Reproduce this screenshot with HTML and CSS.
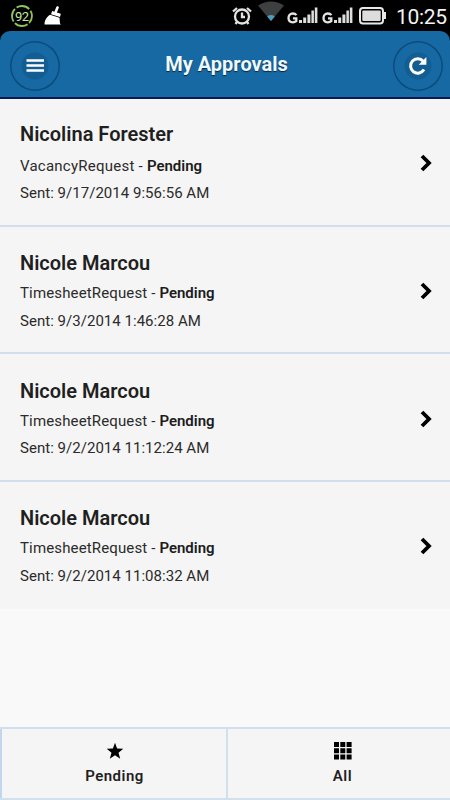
FILE: index.html
```html
<!DOCTYPE html>
<html lang="en">
<head>
<meta charset="utf-8">
<title>My Approvals</title>
<link rel="stylesheet" href="styles.css">
</head>
<body>
<div class="top">
<div class="status">
  <div class="status-left">
    <svg class="ring" width="24" height="24" viewBox="0 0 24 24"><circle cx="12" cy="12" r="10" fill="none" stroke="#8fc75c" stroke-width="1.8" stroke-dasharray="13.7 2" stroke-dashoffset="6"/><text x="12" y="16.5" text-anchor="middle" textLength="14">92</text></svg>
    <svg class="broom" width="18" height="20" viewBox="0 0 18 20"><path d="M13.5 1.5 11.7 6" stroke="#fff" stroke-width="2.6" stroke-linecap="round"/><path d="M8.2 5 16.8 7.8 16 11 7 8.2zM6 8.7 15.5 11.7 16 17.5 17 18.5H.5C.5 14 3 10.5 6 8.7z" fill="#fff"/></svg>
  </div>
  <div class="status-right">
    <svg class="alarm" width="20" height="20" viewBox="0 0 20 20" fill="none" stroke="#e4e4e4" stroke-width="2.3"><circle cx="10" cy="10.5" r="7"/><path d="M10 6.5V11H13M1 5.5 5 2M19 5.5 15 2M5 16 3.5 18M15 16l1.5 2"/></svg>
    <svg class="wifi" width="26" height="20" viewBox="0 0 26 20"><path d="M0 4.5Q13-3.5 26 4.5L13 20z" fill="#3d3f41"/><path d="M9.2 15.4Q13 12.8 16.8 15.4L13 20z" fill="#4a9dbd"/></svg>
    <svg class="signal" width="32" height="18" viewBox="0 0 32 18"><path d="M9.4 9.2Q8.2 7.5 5.8 7.5C3.2 7.5 1.5 9.3 1.5 12S3.2 16.3 5.8 16.3Q8 16.3 9.3 15.2V12.3H6" fill="none" stroke="#e4e4e4" stroke-width="2.3"/><path d="M12 14h3v3h-3zM16.2 11.5h3V17h-3zM20.4 8.5h3V17h-3zM24.4 4.5h2.5V17h-2.5zM27.8 1.5h2.6V17h-2.6z" fill="#dedede"/></svg>
    <svg class="signal" width="32" height="18" viewBox="0 0 32 18"><path d="M9.4 9.2Q8.2 7.5 5.8 7.5C3.2 7.5 1.5 9.3 1.5 12S3.2 16.3 5.8 16.3Q8 16.3 9.3 15.2V12.3H6" fill="none" stroke="#e4e4e4" stroke-width="2.3"/><path d="M12 14h3v3h-3zM16.2 11.5h3V17h-3zM20.4 8.5h3V17h-3zM24.4 4.5h2.5V17h-2.5zM27.8 1.5h2.6V17h-2.6z" fill="#dedede"/></svg>
    <svg class="battery" width="28" height="18" viewBox="0 0 28 18"><rect x="1" y="1" width="23" height="15.5" rx="3" fill="none" stroke="#e8e8e8" stroke-width="2"/><rect x="3.3" y="3.5" width="18.4" height="10.5" rx="1" fill="#ddd"/><path d="M25 5h2v7h-2z" fill="#e8e8e8"/></svg>
    <svg class="clock" width="54" height="24"><text x="0" y="19.5" textLength="51">10:25</text></svg>
  </div>
</div>
<header class="header">
  <button class="round" aria-label="Menu"><svg width="50" height="50" viewBox="0 0 50 50"><circle cx="25" cy="25" r="13.5" fill="#125d92"/><path d="M16.5 19.5H34M16.5 24.5H34M16.5 29.5H34" stroke="#fff" stroke-width="2.7"/></svg></button>
  <h1 class="title">My Approvals</h1>
  <button class="round" aria-label="Refresh"><svg width="50" height="50" viewBox="0 0 50 50"><circle cx="25" cy="25" r="13.5" fill="#125d92"/><path d="M30.2 20.2A7.2 7.2 0 1 0 31 28.6" fill="none" stroke="#fff" stroke-width="3"/><path d="M33.4 16V23.7H25.7z" fill="#fff"/></svg></button>
</header>
</div>
<main class="list">
  <article class="row">
    <div><h2 class="name">Nicolina Forester</h2><p class="line vacancy">VacancyRequest - <b>Pending</b></p><p class="line sent">Sent: 9/17/2014 9:56:56 AM</p></div>
    <svg class="chevron" width="12" height="18" viewBox="0 0 12 18"><path d="M2 2 9 9 2 16"/></svg>
  </article>
  <article class="row">
    <div><h2 class="name">Nicole Marcou</h2><p class="line">TimesheetRequest - <b>Pending</b></p><p class="line sent">Sent: 9/3/2014 1:46:28 AM</p></div>
    <svg class="chevron" width="12" height="18" viewBox="0 0 12 18"><path d="M2 2 9 9 2 16"/></svg>
  </article>
  <article class="row">
    <div><h2 class="name">Nicole Marcou</h2><p class="line">TimesheetRequest - <b>Pending</b></p><p class="line sent">Sent: 9/2/2014 11:12:24 AM</p></div>
    <svg class="chevron" width="12" height="18" viewBox="0 0 12 18"><path d="M2 2 9 9 2 16"/></svg>
  </article>
  <article class="row">
    <div><h2 class="name">Nicole Marcou</h2><p class="line">TimesheetRequest - <b>Pending</b></p><p class="line sent">Sent: 9/2/2014 11:08:32 AM</p></div>
    <svg class="chevron" width="12" height="18" viewBox="0 0 12 18"><path d="M2 2 9 9 2 16"/></svg>
  </article>
</main>
<nav class="tabs">
  <div class="tab pending"><svg width="18" height="18" viewBox="0 0 18 18"><path d="M9 .8 11.1 6.5 17.3 6.8 12.5 10.7 14.2 16.7 9 13.3 3.8 16.7 5.5 10.7.7 6.8 6.9 6.5z"/></svg><span>Pending</span></div>
  <div class="tab"><svg width="18" height="18" viewBox="0 0 18 18"><path d="M0 0h5v5H0zM6.3 0h5v5h-5zM12.6 0h5v5h-5zM0 6.3h5v5H0zM6.3 6.3h5v5h-5zM12.6 6.3h5v5h-5zM0 12.6h5v5H0zM6.3 12.6h5v5h-5zM12.6 12.6h5v5h-5z"/></svg><span>All</span></div>
</nav>
</body>
</html>
```
FILE: styles.css
```css
* { box-sizing: border-box; }
body {
  margin: 0;
  width: 450px;
  height: 800px;
  overflow: hidden;
  display: flex;
  flex-direction: column;
  background: #f9f9f9;
  color: #1f1f1f;
  font-family: Roboto, "Liberation Sans", sans-serif;
}
svg { display: block; flex: none; }
h1, h2, p { margin: 0; }
.top { flex: none; background: #000; }
.status {
  height: 31px;
  display: flex;
  justify-content: space-between;
}
.status-left, .status-right { display: flex; align-items: flex-start; }
.ring { margin: 4px 0 0 10px; }
.ring text { fill: #c5e8a4; font-size: 13px; }
.broom { margin: 6px 0 0 10px; }
.alarm { margin: 6px -2px 0 2px; }
.wifi { margin: 1px 3px 0 8px; }
.signal { margin: 6px 3px 0 0; }
.battery { margin: 7px 9px 0 2px; }
.clock { margin-top: 4px; }
.clock text { fill: #f2f2f2; font-size: 21px; }
.header {
  height: 68px;
  display: flex;
  align-items: center;
  justify-content: space-between;
  padding: 3px 7px 0 10px;
  border-bottom: 2px solid #091b54;
  border-radius: 10px 10px 0 0;
  background: #1769a3;
}
.round {
  width: 50px;
  height: 50px;
  padding: 0;
  border: 0;
  border-radius: 50%;
  background: none;
  box-shadow: inset 0 0 0 1.5px #0d4b7c;
}
.title {
  font-size: 20px;
  line-height: 24px;
  font-weight: 700;
  color: #edfaff;
  text-shadow: 0 1px 1px #123;
  padding-bottom: 3px;
}
.list { flex: none; }
.row {
  height: 127.6px;
  padding: 22.4px 18px 0 20px;
  display: flex;
  justify-content: space-between;
  background: #f5f5f5;
  border-bottom: 2px solid #d2ddef;
}
.row:last-child { border-bottom-color: #f5f5f5; }
.name {
  font-size: 20px;
  line-height: 26px;
  font-weight: 600;
  margin-bottom: 5.2px;
  white-space: nowrap;
}
.row + .row .name { padding-top: 1px; margin-bottom: 4.2px; }
.line {
  font-size: 15px;
  line-height: 27.5px;
  letter-spacing: .14px;
  color: #2b2b2b;
  white-space: nowrap;
}
.vacancy { letter-spacing: .24px; }
.sent { letter-spacing: .03px; }
.line b { font-weight: 600; color: #1c1c1c; letter-spacing: 0; }
.chevron { margin-top: 33px; fill: none; stroke: #000; stroke-width: 3.8; }
.tabs {
  margin-top: auto;
  height: 73px;
  flex: none;
  display: grid;
  grid-template-columns: 228px 1fr;
  border-top: 2px solid #d2dfed;
  border-bottom: 2px solid #d2dfed;
  background: #f5f5f5;
}
.tab {
  display: flex;
  flex-direction: column;
  align-items: center;
  padding: 13px 0 0 7px;
  font-size: 15px;
  line-height: 18px;
  font-weight: 600;
  letter-spacing: .5px;
}
.tab svg { margin-bottom: 7px; }
.pending { border-left: 2px solid #c3d5ef; border-right: 2px solid #d2dfed; padding-left: 1px; }
```
